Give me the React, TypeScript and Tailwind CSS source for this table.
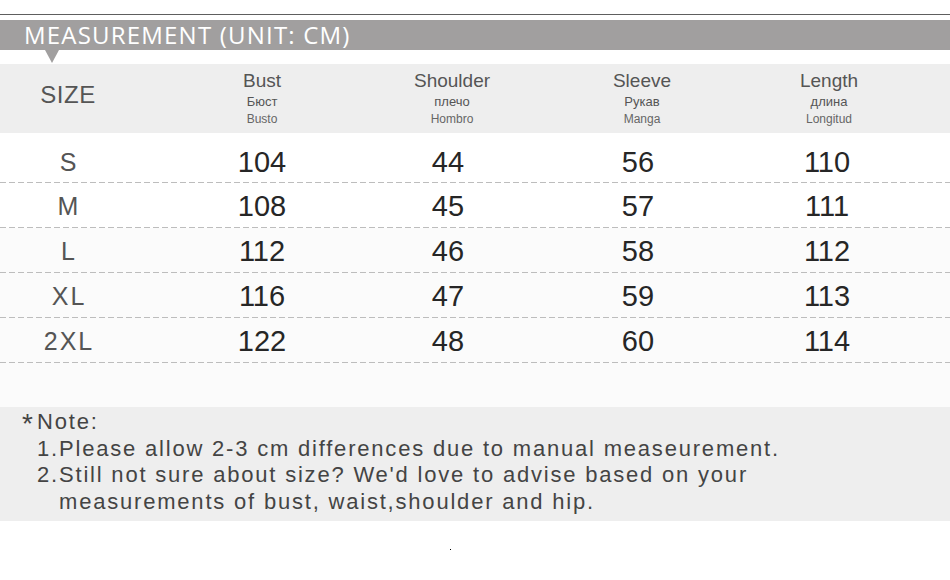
import React from "react";

const rows = [
  ["S", "104", "44", "56", "110"],
  ["M", "108", "45", "57", "111"],
  ["L", "112", "46", "58", "112"],
  ["XL", "116", "47", "59", "113"],
  ["2XL", "122", "48", "60", "114"],
];

const heads = [
  ["Bust", "Бюст", "Busto", ""],
  ["Shoulder", "плечо", "Hombro", ""],
  ["Sleeve", "Рукав", "Manga", ""],
  ["Length", "длина", "Longitud", "pr-[6px]"],
];

const numShift = ["", "pr-[8px]", "pr-[8px]", "pr-[10px]"];

function Dashed() {
  return (
    <div className="h-[1px] w-full bg-[linear-gradient(to_right,#bdbdbd_6px,transparent_6px)] bg-[length:9px_1px] bg-repeat-x" />
  );
}

export default function App() {
  return (
    <div
      className="w-[950px] h-[580px] bg-white overflow-hidden"
      style={{ fontFamily: '"Liberation Sans", Arial, sans-serif' }}
    >
      <div className="h-[14px]" />
      <div className="h-[1px] bg-[#5e5e5e]" />
      <div className="h-[5px]" />
      <div className="h-[30px] bg-[#a19f9f] flex items-center pl-[24px]">
        <span
          className="text-white text-[24px] leading-none tracking-[1.2px]"
          style={{ fontFamily: '"Open Sans", sans-serif' }}
        >
          MEASUREMENT (UNIT: CM)
        </span>
      </div>
      <div className="h-[14px] pl-[45px]">
        <div className="w-0 h-0 border-l-[7.5px] border-r-[7.5px] border-t-[13px] border-l-transparent border-r-transparent border-t-[#a19f9f]" />
      </div>

      {/* header */}
      <div className="h-[69px] bg-[#eeeeee] grid grid-cols-[167px_190px_190px_190px_190px]">
        <div className="flex items-center justify-center pr-[31px] pb-[7px]">
          <span className="text-[24px] leading-none text-[#555] tracking-[0.5px]">SIZE</span>
        </div>
        {heads.map(([a, b, c, cls]) => (
          <div key={a} className={`flex flex-col items-center pt-[7px] ${cls}`}>
            <span className="text-[19px] leading-[19px] text-[#555]">{a}</span>
            <span className="text-[13px] leading-[13px] text-[#555] mt-[5px]">{b}</span>
            <span className="text-[12px] leading-[12px] text-[#666] mt-[5px]">{c}</span>
          </div>
        ))}
      </div>

      {/* rows */}
      {rows.map((r, i) => (
        <div key={r[0]} className={i >= 2 ? "bg-[#fbfbfb]" : "bg-white"}>
          <div
            className={`grid grid-cols-[167px_190px_190px_190px_190px] ${
              i === 0 ? "h-[49px] pt-[9px]" : "h-[44px] pt-[3px]"
            }`}
          >
            <div className="flex items-center justify-center pr-[31px]">
              <span className="text-[25px] leading-none text-[#555] tracking-[2px] pl-[2px]">{r[0]}</span>
            </div>
            {r.slice(1).map((v, j) => (
              <div key={j} className={`flex items-center justify-center ${numShift[j]}`}>
                <span className="text-[29px] leading-none text-[#262626]">{v}</span>
              </div>
            ))}
          </div>
          <Dashed />
        </div>
      ))}

      <div className="h-[44px] bg-[#fbfbfb]" />

      {/* note */}
      <div className="h-[114px] bg-[#eeeeee] pt-[2px] text-[22px] leading-[26.5px] tracking-[1.8px] text-[#444]">
        <div className="flex items-start pl-[22px]">
          <span className="text-[28px] leading-[30px] w-[15px] tracking-normal">*</span>
          <span>Note:</span>
        </div>
        <div className="flex pl-[37px] -mt-[3.5px]">
          <span className="w-[22px] shrink-0">1.</span>
          <span className="whitespace-nowrap">Please allow 2-3 cm differences due to manual measeurement.</span>
        </div>
        <div className="flex pl-[37px]">
          <span className="w-[22px] shrink-0">2.</span>
          <span className="whitespace-nowrap">
            Still not sure about size? We'd love to advise based on your
            <br />
            measurements of bust, waist,shoulder and hip.
          </span>
        </div>
      </div>

      <div className="pt-[28px] pl-[450px]">
        <div className="w-[1px] h-[1px] bg-black" />
      </div>
    </div>
  );
}
